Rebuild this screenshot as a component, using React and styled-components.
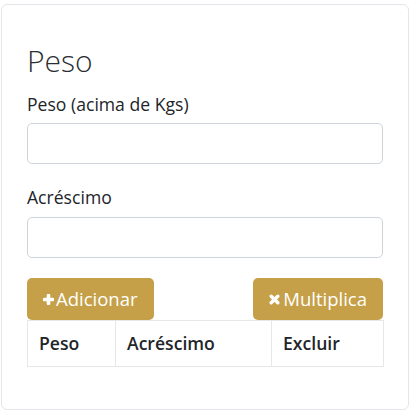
import React from 'react';
import styled, { createGlobalStyle } from 'styled-components';

const GlobalStyle = createGlobalStyle`
    body{
        margin: 0;
        background: #fff;
        font-family: "Open Sans", "Liberation Sans", sans-serif;
        color: #212529;
    }
    *{
        box-sizing: border-box;
    }
`;

const Page = styled.div`
    padding: 4px 2px 3px 1px;
`;

const Card = styled.div`
    width: 408px;
    height: 406px;
    border: 1px solid #e3e6ea;
    border-radius: 6px;
    background: #fff;
    padding: 38px 25px 0 25px;
`;

const Title = styled.h2`
    margin: 0 0 12px 0;
    font-size: 30px;
    font-weight: 300;
    line-height: 36px;
    color: #2b2f33;
`;

const Group = styled.div`
    margin-bottom: 20px;
`;

const Label = styled.label`
    display: block;
    font-size: 17.6px;
    line-height: 26.4px;
    margin-bottom: 6px;
    color: #212529;
`;

const TextInput = styled.input`
    display: block;
    width: 100%;
    height: 41px;
    border: 1px solid #ced4da;
    border-radius: 5px;
    padding: 6px 12px;
    font-family: inherit;
    font-size: 17.6px;
    outline: none;
`;

const Actions = styled.div`
    display: flex;
    justify-content: space-between;
`;

const Button = styled.button`
    display: inline-flex;
    align-items: center;
    gap: ${props => props.$gap || 2}px;
    height: 42px;
    padding: 0 16px 0 16px;
    border: none;
    border-radius: 5px;
    background: #c5a048;
    color: #fff;
    font-family: "Open Sans", "Liberation Sans", sans-serif;
    font-size: 18.5px;
    line-height: 26px;
    cursor: pointer;
    svg{
        display: block;
        margin-top: 1px;
    }
`;

const Table = styled.table`
    width: 100%;
    border-collapse: collapse;
    table-layout: fixed;
`;

const Th = styled.th`
    width: ${props => props.$w}px;
    text-align: left;
    font-size: 17.6px;
    font-weight: 600;
    line-height: 26.4px;
    padding: 9px 11px 10px 11px;
    border: 1px solid #e4e8eb;
    color: #212529;
`;

const PlusIcon = () => (
    <svg width="11" height="11" viewBox="0 0 11 11">
        <path d="M5.5 1.5 V9.5 M1.5 5.5 H9.5" stroke="#fff" strokeWidth="3.6" strokeLinecap="round" />
    </svg>
);

const TimesIcon = () => (
    <svg width="11" height="11" viewBox="0 0 11 11">
        <path d="M2.2 2.2 L8.8 8.8 M8.8 2.2 L2.2 8.8" stroke="#fff" strokeWidth="3.4" strokeLinecap="round" />
    </svg>
);

const App = () => {
    return (
        <Page>
            <GlobalStyle />
            <Card>
                <Title>Peso</Title>
                <Group>
                    <Label>Peso (acima de Kgs)</Label>
                    <TextInput type="text" />
                </Group>
                <Group>
                    <Label>Acréscimo</Label>
                    <TextInput type="text" />
                </Group>
                <Actions>
                    <Button><PlusIcon />Adicionar</Button>
                    <Button $gap={3}><TimesIcon />Multiplica</Button>
                </Actions>
                <Table>
                    <thead>
                        <tr>
                            <Th $w={88}>Peso</Th>
                            <Th $w={156}>Acréscimo</Th>
                            <Th $w={112}>Excluir</Th>
                        </tr>
                    </thead>
                </Table>
            </Card>
        </Page>
    );
};

export default App;
